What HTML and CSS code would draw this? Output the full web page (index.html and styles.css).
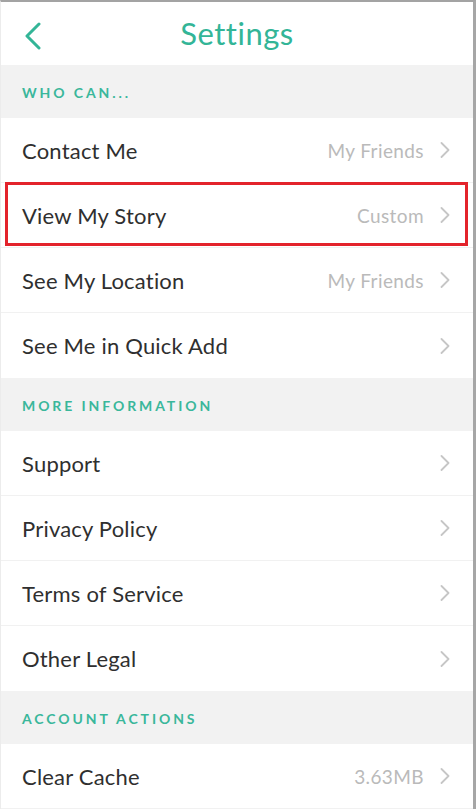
FILE: index.html
```html
<!DOCTYPE html>
<html>
<head>
<meta charset="utf-8">
<link rel="stylesheet" href="styles.css">
</head>
<body>
<div class="phone">
  <header class="topbar">
    <svg class="back" width="20" height="28" viewBox="0 0 20 28"><polyline points="16,2 4,14 16,26" fill="none" stroke="#33b597" stroke-width="3" stroke-linecap="round" stroke-linejoin="round"/></svg>
    <h1 class="title">Settings</h1>
  </header>

  <div class="section">WHO CAN...</div>
  <div class="row"><span class="label">Contact Me</span><span class="value">My Friends</span><svg class="chev" width="10" height="16" viewBox="0 0 10 16"><polyline points="1.5,1 8.5,8 1.5,15" fill="none" stroke="#c6c6c6" stroke-width="1.8" stroke-linecap="round" stroke-linejoin="round"/></svg></div>
  <div class="row highlight"><span class="label">View My Story</span><span class="value">Custom</span><svg class="chev" width="10" height="16" viewBox="0 0 10 16"><polyline points="1.5,1 8.5,8 1.5,15" fill="none" stroke="#c6c6c6" stroke-width="1.8" stroke-linecap="round" stroke-linejoin="round"/></svg></div>
  <div class="row"><span class="label">See My Location</span><span class="value">My Friends</span><svg class="chev" width="10" height="16" viewBox="0 0 10 16"><polyline points="1.5,1 8.5,8 1.5,15" fill="none" stroke="#c6c6c6" stroke-width="1.8" stroke-linecap="round" stroke-linejoin="round"/></svg></div>
  <div class="row last"><span class="label">See Me in Quick Add</span><span class="value"></span><svg class="chev" width="10" height="16" viewBox="0 0 10 16"><polyline points="1.5,1 8.5,8 1.5,15" fill="none" stroke="#c6c6c6" stroke-width="1.8" stroke-linecap="round" stroke-linejoin="round"/></svg></div>

  <div class="section">MORE INFORMATION</div>
  <div class="row"><span class="label">Support</span><span class="value"></span><svg class="chev" width="10" height="16" viewBox="0 0 10 16"><polyline points="1.5,1 8.5,8 1.5,15" fill="none" stroke="#c6c6c6" stroke-width="1.8" stroke-linecap="round" stroke-linejoin="round"/></svg></div>
  <div class="row"><span class="label">Privacy Policy</span><span class="value"></span><svg class="chev" width="10" height="16" viewBox="0 0 10 16"><polyline points="1.5,1 8.5,8 1.5,15" fill="none" stroke="#c6c6c6" stroke-width="1.8" stroke-linecap="round" stroke-linejoin="round"/></svg></div>
  <div class="row"><span class="label">Terms of Service</span><span class="value"></span><svg class="chev" width="10" height="16" viewBox="0 0 10 16"><polyline points="1.5,1 8.5,8 1.5,15" fill="none" stroke="#c6c6c6" stroke-width="1.8" stroke-linecap="round" stroke-linejoin="round"/></svg></div>
  <div class="row last"><span class="label">Other Legal</span><span class="value"></span><svg class="chev" width="10" height="16" viewBox="0 0 10 16"><polyline points="1.5,1 8.5,8 1.5,15" fill="none" stroke="#c6c6c6" stroke-width="1.8" stroke-linecap="round" stroke-linejoin="round"/></svg></div>

  <div class="section">ACCOUNT ACTIONS</div>
  <div class="row"><span class="label">Clear Cache</span><span class="value">3.63MB</span><svg class="chev" width="10" height="16" viewBox="0 0 10 16"><polyline points="1.5,1 8.5,8 1.5,15" fill="none" stroke="#c6c6c6" stroke-width="1.8" stroke-linecap="round" stroke-linejoin="round"/></svg></div>
</div>
</body>
</html>
```

FILE: styles.css
```css
* { box-sizing: border-box; }
html, body { margin: 0; padding: 0; background: #fff; }
body { font-family: Lato, "Noto Sans", "Liberation Sans", sans-serif; overflow: hidden; }

.phone {
  width: 476px;
  height: 809px;
  overflow: hidden;
  border-top: 2px solid #a3a3a3;
  border-right: 3px solid #a6a6a6;
  border-left: 1px solid #ececec;
  background: #fff;
}

.topbar {
  height: 63px;
  display: flex;
  align-items: center;
  justify-content: center;
  position: relative;
}
.back {
  position: absolute;
  left: 22px;
  top: 20px;
}
.title {
  margin: 0;
  font-size: 31px;
  font-weight: 400;
  color: #33b597;
  letter-spacing: 0.5px;
  margin-top: -2px;
}

.section {
  height: 53px;
  background: #f2f2f2;
  display: flex;
  align-items: center;
  padding-left: 21px;
  padding-top: 2px;
  font-size: 14px;
  font-weight: 700;
  letter-spacing: 2.9px;
  color: #3ab79b;
}

.row {
  height: 65px;
  display: flex;
  align-items: center;
  padding-left: 21px;
  padding-right: 23px;
  border-bottom: 1px solid #f1f1f1;
  position: relative;
}
.row.last { border-bottom: none; }
.label {
  flex: 1;
  font-size: 22px;
  color: #2f2f2f;
  letter-spacing: 0.2px;
}
.value {
  font-size: 19px;
  color: #bababa;
  letter-spacing: 0.4px;
  margin-right: 16px;
}
.chev { display: block; }

.highlight::after {
  content: "";
  position: absolute;
  top: -1px;
  bottom: 1px;
  left: 4px;
  right: 5px;
  border: 3px solid #e3232b;
}
```
